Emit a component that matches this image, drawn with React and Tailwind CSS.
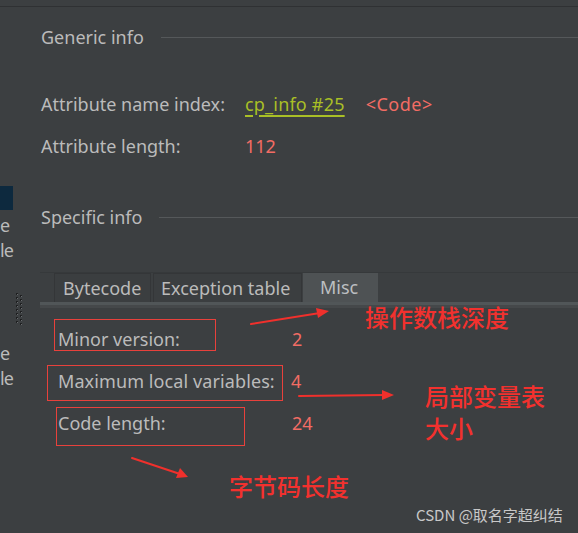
export default function App() {
  const ui = { fontFamily: '"Noto Sans", "Open Sans", sans-serif' };
  const cjk = { fontFamily: '"Noto Sans CJK SC", "Noto Sans", sans-serif' };

  return (
    <div className="relative w-[578px] h-[533px] overflow-hidden bg-[#3c3f41] text-[#bbbbbb] text-[18px]" style={ui}>
      <div className="h-[6px]" />
      <div className="border-t border-[#2f3133]" />

      <div className="flex">
        {/* tree panel, scrolled so only the word endings show */}
        <div className="w-[13px] whitespace-nowrap leading-[25px]">
          <div className="h-[24px] mt-[179px] bg-[#0d293e]" />
          <div className="mt-[3px]">e</div>
          <div className="tracking-[-1px]">le</div>
          <div className="mt-[78px]">e</div>
          <div className="tracking-[-1px]">le</div>
        </div>

        {/* splitter grip */}
        <div className="w-[27px] pt-[286px] pl-[3px]">
          <svg width="7" height="33" viewBox="0 0 7 33">
            {[0, 1, 2, 3, 4, 5, 6, 7].map((i) => (
              <g key={i}>
                <rect x="0" y={i * 4} width="2" height="2" fill="#1f2021" />
                <rect x="4" y={i * 4 + 2} width="2" height="2" fill="#1f2021" />
                <rect x="1" y={i * 4 + 1} width="1" height="1" fill="#6a6d70" />
                <rect x="5" y={i * 4 + 3} width="1" height="1" fill="#6a6d70" />
              </g>
            ))}
          </svg>
        </div>

        {/* main panel */}
        <div className="flex-1">
          <div className="flex items-center mt-[18px] h-[24px] pl-px">
            <span className="leading-[24px]">Generic info</span>
            <div className="flex-1 ml-[17px] border-t border-[#55585a]" />
          </div>

          <div className="flex items-center mt-[43px] h-[24px] pl-px">
            <span className="w-[204px]">Attribute name index:</span>
            <span className="text-[#a9bf26] underline decoration-[2px] underline-offset-[4px] tracking-[0.2px]">cp_info #25</span>
            <span className="ml-[21px] text-[#f26c64] tracking-[0.5px]">&lt;Code&gt;</span>
          </div>

          <div className="flex items-center mt-[18px] h-[24px] pl-px">
            <span className="w-[204px]">Attribute length:</span>
            <span className="text-[#f26c64]">112</span>
          </div>

          <div className="flex items-center mt-[47px] h-[24px] pl-px">
            <span className="leading-[24px]">Specific info</span>
            <div className="flex-1 ml-[17px] border-t border-[#55585a]" />
          </div>

          {/* tabs */}
          <div className="mt-[43px]">
            <div className="flex h-[30px] border-t border-[#36393b] pl-[14px]">
              <div className="flex items-center w-[97px] pl-[8px] border border-b-0 border-[#343638] bg-[#3b3e40] whitespace-nowrap">Bytecode</div>
              <div className="flex items-center w-[149px] pl-[7px] ml-[2px] border border-b-0 border-[#343638] bg-[#3b3e40] whitespace-nowrap">Exception table</div>
              <div className="flex items-center w-[75px] pl-[17px] ml-px bg-[#4e5254] text-[#bcbfc1]">Misc</div>
            </div>
            <div className="h-[3px] bg-[#515658]" />
            <div className="h-[3px] bg-[#45484a]" />
          </div>

          {/* misc rows */}
          <div className="flex items-start mt-[11px]">
            <div className="ml-[14px] w-[162px] h-[32px] border border-[#e8413c] pl-[3px] pt-[7px] leading-[24px] whitespace-nowrap">Minor version:</div>
            <div className="ml-[76px] pt-[8px] leading-[24px] text-[#f26c64]">2</div>
          </div>

          <div className="flex items-start mt-[14px]">
            <div className="ml-[7px] w-[236px] h-[36px] border border-[#e8413c] pl-[10px] pt-[3px] leading-[24px] whitespace-nowrap tracking-[0.1px]">Maximum local variables:</div>
            <div className="ml-[8px] pt-[4px] leading-[24px] text-[#f26c64]">4</div>
          </div>

          <div className="flex items-start mt-[6px]">
            <div className="ml-[16px] w-[189px] h-[39px] border border-[#e8413c] pl-px pt-[3px] leading-[24px] whitespace-nowrap">Code length:</div>
            <div className="ml-[47px] pt-[4px] leading-[24px] text-[#f26c64]">24</div>
          </div>
        </div>
      </div>

      {/* annotations drawn on top */}
      <svg className="absolute left-0 top-0" width="578" height="533" viewBox="0 0 578 533">
        <g stroke="#f0302c" strokeWidth="2" fill="#f0302c" strokeLinecap="round">
          <line x1="251" y1="324" x2="320" y2="313" />
          <polygon points="329,311 316,308 318,318" stroke="none" />
          <line x1="299" y1="396" x2="385" y2="395" />
          <polygon points="394,395 382,390 382,400" stroke="none" />
          <line x1="132" y1="458" x2="180" y2="474" />
          <polygon points="188,477 180,468 176,478" stroke="none" />
        </g>
      </svg>

      <div className="absolute left-[365px] top-[301px] text-[24px] leading-[32px] font-medium text-[#f2312e]" style={cjk}>操作数栈深度</div>
      <div className="absolute left-[425px] top-[380px] text-[24px] leading-[32px] font-medium text-[#f2312e]" style={cjk}>局部变量表<br />大小</div>
      <div className="absolute left-[229px] top-[470px] text-[24px] leading-[32px] font-medium text-[#f2312e]" style={cjk}>字节码长度</div>
      <div className="absolute left-[416px] top-[505px] text-[15px] leading-[20px] text-[#c8c8c8]" style={cjk}>CSDN @取名字超纠结</div>
    </div>
  );
}
